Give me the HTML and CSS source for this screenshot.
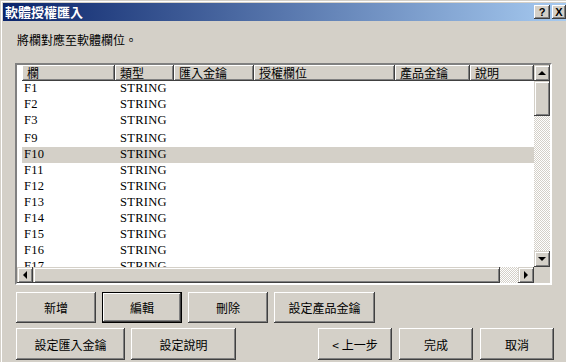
FILE: index.html
```html
<!DOCTYPE html>
<html lang="zh-Hant">
<head>
  <meta charset="UTF-8" />
  <title>軟體授權匯入</title>
  <link rel="stylesheet" href="styles.css">
</head>
<body>
  <div class="dialog">
    <div class="titlebar">
      <span class="title">軟體授權匯入</span>
      <div class="caption-btns">
        <span class="cap-btn">?</span>
        <span class="cap-btn close">X</span>
      </div>
    </div>

    <div class="prompt">將欄對應至軟體欄位。</div>

    <div class="listview">
      <div class="list-body">
        <div class="header">
          <div class="hcell c1">欄</div>
          <div class="hcell c2">類型</div>
          <div class="hcell c3">匯入金鑰</div>
          <div class="hcell c4">授權欄位</div>
          <div class="hcell c5">產品金鑰</div>
          <div class="hcell c6">說明</div>
        </div>
        <div class="row"><span class="c1">F1</span><span class="c2">STRING</span></div>
        <div class="row"><span class="c1">F2</span><span class="c2">STRING</span></div>
        <div class="row"><span class="c1">F3</span><span class="c2">STRING</span></div>
        <div class="row tall"><span class="c1">F9</span><span class="c2">STRING</span></div>
        <div class="row selected"><span class="c1">F10</span><span class="c2">STRING</span></div>
        <div class="row"><span class="c1">F11</span><span class="c2">STRING</span></div>
        <div class="row"><span class="c1">F12</span><span class="c2">STRING</span></div>
        <div class="row"><span class="c1">F13</span><span class="c2">STRING</span></div>
        <div class="row"><span class="c1">F14</span><span class="c2">STRING</span></div>
        <div class="row"><span class="c1">F15</span><span class="c2">STRING</span></div>
        <div class="row"><span class="c1">F16</span><span class="c2">STRING</span></div>
        <div class="row"><span class="c1">F17</span><span class="c2">STRING</span></div>
      </div>

      <div class="vscroll">
        <div class="sb-btn"><span class="arrow up"></span></div>
        <div class="vthumb"></div>
        <div class="track"></div>
        <div class="sb-btn"><span class="arrow down"></span></div>
      </div>

      <div class="hscroll">
        <div class="sb-btn"><span class="arrow left"></span></div>
        <div class="hthumb"></div>
        <div class="track"></div>
        <div class="sb-btn"><span class="arrow right"></span></div>
      </div>

      <div class="corner"></div>
    </div>

    <div class="btn-row first">
      <button class="btn w80">新增</button>
      <button class="btn w80 focused">編輯</button>
      <button class="btn w80">刪除</button>
      <button class="btn w101">設定產品金鑰</button>
    </div>
    <div class="btn-row second">
      <button class="btn w109">設定匯入金鑰</button>
      <button class="btn w105">設定說明</button>
      <div class="nav">
        <button class="btn w74">&lt; 上一步</button>
        <button class="btn w74">完成</button>
        <button class="btn w74">取消</button>
      </div>
    </div>
  </div>
</body>
</html>
```

FILE: styles.css
```css
body {
  margin: 0;
  background: #d4d0c8;
  font-family: "Noto Sans CJK TC", "Liberation Sans", sans-serif;
  font-size: 12px;
  color: #000;
  overflow: hidden;
}
.dialog {
  width: 566px;
  height: 362px;
  box-sizing: border-box;
  padding: 3px 0 0 3px;
  background: #d4d0c8;
  box-shadow: inset 1px 1px 0 #d4d0c8, inset 2px 2px 0 #fff;
}
.titlebar {
  height: 18px;
  display: flex;
  align-items: center;
  justify-content: space-between;
  background: linear-gradient(to right, #0a246a, #a6caf0);
}
.title {
  color: #fff;
  font-weight: bold;
  font-size: 13px;
  padding-left: 2px;
  line-height: 18px;
}
.caption-btns {
  display: flex;
  gap: 2px;
}
.cap-btn {
  width: 16px;
  height: 14px;
  box-sizing: border-box;
  background: #d4d0c8;
  font-family: "Liberation Sans", sans-serif;
  font-weight: bold;
  font-size: 11px;
  line-height: 14px;
  text-align: center;
  box-shadow: inset -1px -1px 0 #404040, inset 1px 1px 0 #fff, inset -2px -2px 0 #808080;
}
.cap-btn.close {
  width: 14px;
}
.prompt {
  margin: 11px 0 0 14px;
  line-height: 16px;
  font-size: 12px;
}
.listview {
  margin: 15px 0 0 12px;
  width: 537px;
  height: 222px;
  box-sizing: border-box;
  border: 2px solid;
  border-color: #808080 #fff #fff #808080;
  box-shadow: inset 1px 1px 0 #404040, inset -1px -1px 0 #d4d0c8;
  display: grid;
  grid-template-columns: 517px 16px;
  grid-template-rows: 202px 16px;
  background: #fff;
}
.list-body {
  padding-left: 5px;
  overflow: hidden;
  background: #fff;
}
.header {
  display: flex;
  height: 16px;
}
.hcell {
  box-sizing: border-box;
  height: 16px;
  line-height: 16px;
  padding-left: 5px;
  background: #d4d0c8;
  box-shadow: inset -1px -1px 0 #404040, inset 1px 1px 0 #fff, inset -2px -2px 0 #808080;
  white-space: nowrap;
}
.c1 { width: 93px; }
.c2 { width: 59px; }
.c3 { width: 80px; }
.c4 { width: 141px; }
.c5 { width: 75px; }
.c6 { width: 64px; }
.row {
  display: flex;
  height: 16px;
  line-height: 15px;
  font-family: "Liberation Serif", serif;
  font-size: 12.5px;
}
.row span {
  padding-left: 2px;
  box-sizing: border-box;
  white-space: nowrap;
  letter-spacing: 0.3px;
}
.row span.c2 {
  padding-left: 5px;
}
.row.tall {
  height: 18px;
  line-height: 19px;
}
.row.selected {
  background: #d4d0c8;
}
.vscroll {
  display: flex;
  flex-direction: column;
  background: #d4d0c8;
}
.hscroll {
  display: flex;
  background: #d4d0c8;
}
.track {
  flex: 1;
  background: repeating-conic-gradient(#fff 0 25%, #d4d0c8 0 50%) 0 0 / 2px 2px;
}
.sb-btn, .vthumb, .hthumb {
  box-sizing: border-box;
  background: #d4d0c8;
  box-shadow: inset -1px -1px 0 #404040, inset 1px 1px 0 #d4d0c8, inset 2px 2px 0 #fff, inset -2px -2px 0 #808080;
}
.sb-btn {
  width: 16px;
  height: 16px;
  display: flex;
  align-items: center;
  justify-content: center;
}
.vthumb {
  height: 35px;
}
.hthumb {
  width: 467px;
}
.arrow {
  width: 0;
  height: 0;
  border: 4px solid transparent;
}
.arrow.up { border-bottom-color: #000; border-top-width: 0; }
.arrow.down { border-top-color: #000; border-bottom-width: 0; }
.arrow.left { border-right-color: #000; border-left-width: 0; }
.arrow.right { border-left-color: #000; border-right-width: 0; }
.corner {
  background: #d4d0c8;
}
.btn-row {
  display: flex;
  gap: 6px;
  margin-left: 13px;
}
.btn-row.first {
  margin-top: 7px;
}
.btn-row.second {
  margin-top: 5px;
}
.btn {
  height: 31px;
  box-sizing: border-box;
  border: none;
  padding: 0;
  background: #d4d0c8;
  font-family: "Noto Sans CJK TC", "Liberation Sans", sans-serif;
  font-size: 12px;
  color: #000;
  box-shadow: inset -1px -1px 0 #404040, inset 1px 1px 0 #fff, inset -2px -2px 0 #808080;
}
.btn-row.second .btn {
  height: 32px;
}
.btn.focused {
  box-shadow: inset 0 0 0 1px #000, inset -2px -2px 0 #404040, inset 2px 2px 0 #fff, inset -3px -3px 0 #808080;
}
.w74 { width: 74px; }
.w80 { width: 80px; }
.w101 { width: 101px; }
.w105 { width: 105px; }
.w109 { width: 109px; }
.nav {
  display: flex;
  gap: 7px;
  margin-left: auto;
  margin-right: 12px;
}
```
